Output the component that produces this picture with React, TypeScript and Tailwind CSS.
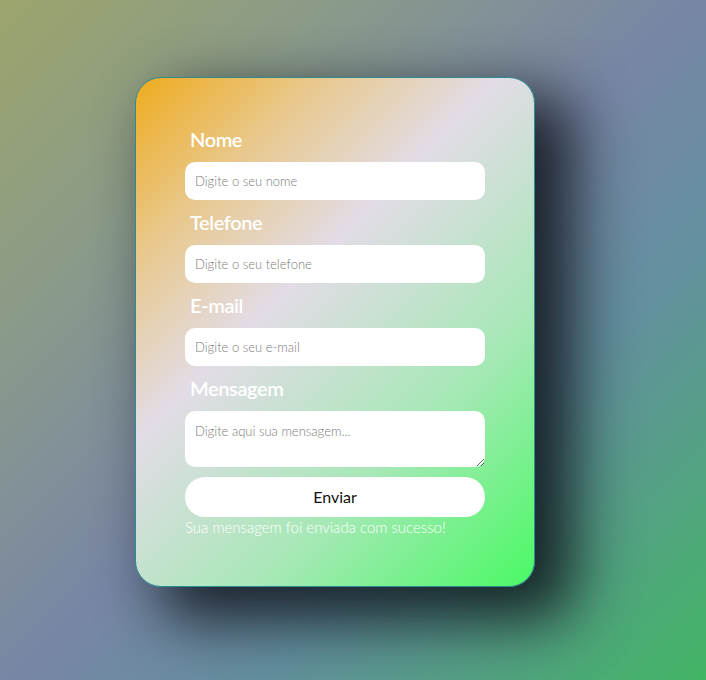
import React from "react";

const labelCls =
  "block ml-[5px] mt-[10px] mb-[11px] h-[24px] leading-[24px] text-[20px] font-semibold text-white tracking-[-0.4px]";

const Field = ({ label, placeholder }: { label: string; placeholder: string }) => (
  <>
    <label className={labelCls}>{label}</label>
    <input
      type="text"
      placeholder={placeholder}
      className="block w-[300px] h-[38px] rounded-[10px] bg-white px-[10px] text-[13px] font-light text-[#333] placeholder:text-[#7b7b7b] outline-none border-0"
    />
  </>
);

export default function App() {
  return (
    <div
      className="w-full h-[680px] overflow-hidden pl-[135px] pt-[77px] bg-[linear-gradient(135deg,#9ca56c_0%,#8a9a8a_25%,#7886a5_50%,#6490a0_68%,#42b564_100%)]"
      style={{ fontFamily: "Lato, 'Noto Sans', sans-serif" }}
    >
      <div className="w-[400px] h-[510px] rounded-[26px] border border-[#2b8c94] px-[49px] pt-[39px] shadow-[32px_26px_60px_8px_rgba(8,12,18,0.82)] bg-[linear-gradient(135deg,#efab1e_0%,#e8c88c_20%,#e2dce6_40%,#a6e8b6_70%,#4af964_100%)]">
        <form className="flex flex-col w-[300px]" onSubmit={(e) => e.preventDefault()}>
          <Field label="Nome" placeholder="Digite o seu nome" />
          <Field label="Telefone" placeholder="Digite o seu telefone" />
          <Field label="E-mail" placeholder="Digite o seu e-mail" />
          <label className={labelCls}>Mensagem</label>
          <textarea
            placeholder="Digite aqui sua mensagem..."
            className="block w-[300px] h-[56px] rounded-[10px] bg-white px-[10px] pt-[12px] leading-[16px] text-[13px] font-light text-[#333] placeholder:text-[#7b7b7b] outline-none border-0"
          />
          <button
            type="submit"
            className="mt-[10px] w-[300px] h-[40px] rounded-full bg-white text-[16px] text-[#111] font-normal"
          >
            Enviar
          </button>
          <p className="h-[20px] leading-[20px] text-[15px] font-light text-white">
            Sua mensagem foi enviada com sucesso!
          </p>
        </form>
      </div>
    </div>
  );
}
